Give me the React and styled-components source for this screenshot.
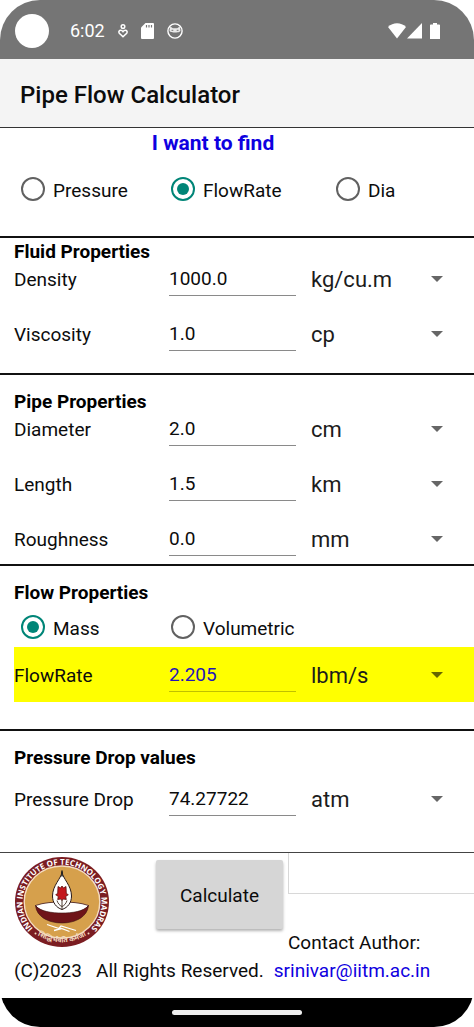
import React, { useState } from "react";
import styled, { createGlobalStyle, css } from "styled-components";

const theme = {
  text: "#0c0c0c",
  muted: "#616161",
  accent: "#008577",
  link: "#0f00e0",
  highlight: "#ffff00",
};

const GlobalStyle = createGlobalStyle`
  * {
    box-sizing: border-box;
  }

  body {
    margin: 0;
    background: #ffffff;
    color: ${theme.text};
    font-family: Roboto, "Liberation Sans", sans-serif;
    font-size: 19px;
    line-height: 24px;
  }
`;

const Screen = styled.div`
  display: flex;
  flex-direction: column;
  min-height: 100vh;
  overflow: hidden;
  border-radius: 40px;
  background: #ffffff;
`;

const StatusBar = styled.div`
  display: flex;
  align-items: center;
  justify-content: space-between;
  height: 59px;
  padding: 3px 34px 0 15px;
  background: #757575;
  color: #ffffff;
`;

const StatusGroup = styled.div`
  display: flex;
  align-items: center;
  gap: ${({ $gap }) => $gap}px;
`;

const Camera = styled.span`
  width: 34px;
  height: 34px;
  margin-right: 8px;
  border-radius: 50%;
  background: #ffffff;
`;

const Clock = styled.time`
  font-size: 18px;
`;

const Header = styled.header`
  padding: 22px 20px 18px;
  border-bottom: 1px solid #333333;
  background: #f4f4f4;
`;

const AppTitle = styled.h1`
  margin: 0;
  font-size: 24px;
  font-weight: 500;
  line-height: 28px;
`;

const Section = styled.section`
  padding-top: ${({ $top = 13 }) => $top}px;
  padding-bottom: ${({ $bottom = 0 }) => $bottom}px;
  border-bottom: ${({ $thin }) => ($thin ? "1px solid #444444" : "2px solid #111111")};
`;

const FindTitle = styled.h2`
  margin: 0;
  padding: 1px 48px 0 0;
  color: ${theme.link};
  font-size: 21px;
  font-weight: 700;
  line-height: 28px;
  text-align: center;
`;

const SectionTitle = styled.h2`
  height: 24px;
  margin: 0;
  padding-left: 14px;
  color: #000000;
  font-size: 19px;
  font-weight: 700;
  line-height: 28px;
`;

const RadioGroup = styled.div`
  display: grid;
  grid-template-columns: 150fr 165fr 138fr;
  padding: ${({ $pad }) => $pad};
`;

const RadioLabel = styled.label`
  display: flex;
  align-items: center;
  gap: 8px;
  height: 24px;
  cursor: pointer;
`;

const RadioText = styled.span`
  padding-top: 3px;
`;

const RadioInput = styled.input`
  display: grid;
  place-items: center;
  flex: none;
  appearance: none;
  width: 24px;
  height: 24px;
  margin: 0;
  border: 2px solid ${theme.muted};
  border-radius: 50%;

  &:checked {
    border-color: ${theme.accent};
  }

  &:checked::before {
    content: "";
    width: 12px;
    height: 12px;
    border-radius: 50%;
    background: ${theme.accent};
  }
`;

const Fields = styled.div`
  display: grid;
  gap: 21px;
  padding-top: ${({ $top = 0 }) => $top}px;
  padding-left: 14px;
`;

const FieldRow = styled.div`
  display: grid;
  grid-template-columns: 155fr 142fr 163fr;
  align-items: center;

  ${({ $highlight }) =>
    $highlight &&
    css`
      padding: 11px 0 10px;
      background: ${theme.highlight};
    `}
`;

const FieldLabel = styled.label`
  padding-top: 2px;
`;

const ValueInput = styled.input`
  width: calc(100% - 15px);
  height: 34px;
  padding: 0 0 1px;
  border: 0;
  border-bottom: 1px solid ${({ $blue }) => ($blue ? "#c0c000" : "#8a8a8a")};
  border-radius: 0;
  outline: none;
  background: transparent;
  color: ${({ $blue }) => ($blue ? "#2414b8" : theme.text)};
  font: inherit;
`;

const SelectBox = styled.div`
  display: grid;
  align-items: center;

  > * {
    grid-area: 1 / 1;
  }
`;

const UnitSelect = styled.select`
  appearance: none;
  width: 100%;
  height: 34px;
  padding: 2px 0 0;
  border: 0;
  outline: none;
  background: transparent;
  color: #1c1c1c;
  font: inherit;
  font-size: 22px;
`;

const Arrow = styled.svg`
  justify-self: end;
  width: 12px;
  height: 6px;
  margin-right: 31px;
  pointer-events: none;
  fill: rgba(0, 0, 0, 0.6);
`;

const Footer = styled.footer`
  padding-left: 14px;
`;

const FooterGrid = styled.div`
  display: grid;
  grid-template-columns: 142fr 132fr 186fr;
  align-items: start;
`;

const Logo = styled.svg`
  display: block;
  width: 96px;
  height: 92px;
  margin-top: 3px;
`;

const CalculateButton = styled.button`
  height: 69px;
  margin: 7px 5px 0 0;
  padding: 2px 0 0;
  border: 0;
  border-radius: 2px;
  background: #d6d6d6;
  box-shadow: 0 2px 3px rgba(0, 0, 0, 0.3);
  color: ${theme.text};
  font: inherit;
  cursor: pointer;
`;

const Message = styled.input`
  display: block;
  width: 100%;
  height: 41px;
  border: solid #d8d8d8;
  border-width: 0 0 1px 1px;
  outline: none;
  background: transparent;
  font: inherit;
`;

const Contact = styled.p`
  margin: 37px 0 4px;
`;

const Legal = styled.div`
  display: flex;
  flex-wrap: wrap;
  gap: 10px;
  white-space: pre;
`;

const MailLink = styled.a`
  color: ${theme.link};
  text-decoration: none;
`;

const NavBar = styled.div`
  display: flex;
  align-items: center;
  justify-content: center;
  height: 29px;
  margin-top: auto;
  background: #000000;
`;

const NavHandle = styled.span`
  width: 130px;
  height: 5px;
  border-radius: 3px;
  background: #eeeeee;
`;

const Radio = ({ name, label, checked, onChange }) => (
  <RadioLabel>
    <RadioInput type="radio" name={name} checked={checked} onChange={() => onChange(label)} />
    <RadioText>{label}</RadioText>
  </RadioLabel>
);

const Field = ({ id, label, value, units, highlight }) => (
  <FieldRow $highlight={highlight}>
    <FieldLabel htmlFor={id}>{label}</FieldLabel>
    <ValueInput id={id} type="text" inputMode="decimal" defaultValue={value} $blue={highlight} />
    <SelectBox>
      <UnitSelect aria-label={`${label} unit`} defaultValue={units[0]}>
        {units.map((unit) => (
          <option key={unit}>{unit}</option>
        ))}
      </UnitSelect>
      <Arrow viewBox="0 0 12 6" aria-hidden="true">
        <path d="M0 0h12L6 6z" />
      </Arrow>
    </SelectBox>
  </FieldRow>
);

const InstituteLogo = () => (
  <Logo viewBox="0 0 96 92" role="img" aria-label="Indian Institute of Technology Madras">
    <defs>
      <path id="ringTop" d="M19.500 73A39.500 38 0 1 1 76.500 73" />
      <path id="ringBottom" d="M16 73A44 42.500 0 0 0 80 73" />
    </defs>
    <ellipse cx="48" cy="46" rx="47" ry="45" fill="#7b1d22" />
    <ellipse cx="48" cy="46" rx="37.8" ry="36" fill="#d6a04c" stroke="#f4dcc0" strokeWidth="1.4" />
    <text fill="#ffffff" fontSize="8" fontWeight="700" fontFamily="Open Sans, Noto Sans, sans-serif">
      <textPath href="#ringTop" startOffset="50%" textAnchor="middle">
        INDIAN INSTITUTE OF TECHNOLOGY MADRAS
      </textPath>
    </text>
    <text fill="#f4dcc0" fontSize="7" fontWeight="700" fontFamily="Noto Sans, sans-serif">
      <textPath href="#ringBottom" startOffset="50%" textAnchor="middle">
        सिद्धिर्भवति कर्मजा
      </textPath>
    </text>
    <circle cx="21.5" cy="77.5" r="1" fill="#f4dcc0" />
    <circle cx="74.5" cy="77.5" r="1" fill="#f4dcc0" />
    <path
      d="M21.500 49.500c8-3 19-3.500 26.500-3.500s18.500.5 26.500 3.500C70 56 58 58 48 58S26 56 21.500 49.500z"
      fill="#ffffff"
      stroke="#3d1414"
      strokeWidth="0.8"
    />
    <path
      d="M21.500 49.500C22.500 60.500 34 67 48 67s25.500-6.500 26.500-17.500C70 55.500 58 57 48 57S26 55.500 21.500 49.500z"
      fill="#6f1419"
      stroke="#3d1414"
      strokeWidth="0.6"
    />
    <path
      d="M48 16c.8 6.500 9.500 13.500 9.500 24 0 6.500-3.500 11.500-9.500 13.500-6-2-9.500-7-9.500-13.500 0-10.500 8.700-17.500 9.500-24z"
      fill="#ffffff"
      stroke="#2a1a18"
      strokeWidth="1"
    />
    <path d="M47.200 14.500h1.600v6h-1.600z" fill="#222222" />
    <path
      d="M44 30.500l2.500 1.500 1.500-2 1.500 2 2.500-1.500.3 7 2 1.200-2.600 1.800.6 3-3-.5-1.300 1.500-1.300-1.500-3 .5.600-3-2.600-1.800 2-1.200z"
      fill="#c4171d"
      stroke="#58100f"
      strokeWidth="0.8"
    />
    <path
      d="M48 44v9.500M43 44.500c1 3 2.500 5 5 6 2.500-1 4-3 5-6"
      fill="none"
      stroke="#3d2a20"
      strokeWidth="0.900"
    />
    <path
      d="M33 68.500l12 4 2-2.500 15 4.500M40 74.500l7.500-2 8 3"
      fill="none"
      stroke="#ffffff"
      strokeWidth="1.300"
    />
  </Logo>
);

const StatusIcons = () => (
  <StatusGroup $gap={13}>
    <Camera />
    <Clock>6:02</Clock>
    <svg width="10" height="14" viewBox="0 0 10 14" fill="none" stroke="#ffffff" strokeWidth="1.5">
      <circle cx="5" cy="2.600" r="1.800" />
      <path d="M5 12.800L1.300 9.200C.3 7.800 1.300 6.200 2.700 6.200c1 0 1.700.5 2.300 1.400.6-.9 1.300-1.400 2.300-1.400 1.400 0 2.400 1.600 1.400 3z" />
    </svg>
    <svg width="13" height="16" viewBox="0 0 13 16">
      <path d="M4.500 0H12a1 1 0 0 1 1 1v14a1 1 0 0 1-1 1H1a1 1 0 0 1-1-1V4.500z" fill="#ffffff" />
      <path d="M5.500 2v2.500M8 2v2.500M10.500 2v2.500" stroke="#757575" strokeWidth="1.200" />
    </svg>
    <svg width="16" height="16" viewBox="0 0 16 16">
      <circle cx="8" cy="8" r="7.100" fill="none" stroke="#ffffff" strokeWidth="1.400" />
      <path
        d="M3.300 3.600L5.800 5.200h4.400l2.500-1.600.8 3.600c0 1.300-1.500 2.300-5.500 2.300S2.500 8.500 2.500 7.200z"
        fill="#ffffff"
        fillOpacity="0.850"
      />
      <path d="M4.500 7.300h1.800M9.700 7.300h1.800" stroke="#757575" strokeWidth="1" />
    </svg>
  </StatusGroup>
);

const SignalIcons = () => (
  <StatusGroup $gap={1}>
    <svg width="18" height="16" viewBox="0 0 18 16" fill="#ffffff">
      <path d="M0 4C5-1 13-1 18 4L9 15.500z" />
    </svg>
    <svg width="15" height="16" viewBox="0 0 15 16" fill="#ffffff">
      <path d="M15 0v15.500H0z" />
    </svg>
    <svg width="17" height="16" viewBox="1 0 17 16" fill="#ffffff">
      <path d="M11 0h4v1.500h2.200a.8.800 0 0 1 .8.800V16H8V2.300a.8.800 0 0 1 .8-.8H11z" />
    </svg>
  </StatusGroup>
);

const App = () => {
  const [target, setTarget] = useState("FlowRate");
  const [flowType, setFlowType] = useState("Mass");

  return (
    <>
      <GlobalStyle />
      <Screen>
        <StatusBar>
          <StatusIcons />
          <SignalIcons />
        </StatusBar>

        <Header>
          <AppTitle>Pipe Flow Calculator</AppTitle>
        </Header>

        <main>
          <Section $top={0} $bottom={35}>
            <FindTitle>I want to find</FindTitle>
            <RadioGroup $pad="20px 0 0 21px">
              {["Pressure", "FlowRate", "Dia"].map((name) => (
                <Radio
                  key={name}
                  name="target"
                  label={name}
                  checked={target === name}
                  onChange={setTarget}
                />
              ))}
            </RadioGroup>
          </Section>

          <Section $top={0} $bottom={22}>
            <SectionTitle>Fluid Properties</SectionTitle>
            <Fields>
              <Field id="density" label="Density" value="1000.0" units={["kg/cu.m", "lb/cu.ft"]} />
              <Field id="viscosity" label="Viscosity" value="1.0" units={["cp", "Pa.s"]} />
            </Fields>
          </Section>

          <Section $bottom={8}>
            <SectionTitle>Pipe Properties</SectionTitle>
            <Fields>
              <Field id="diameter" label="Diameter" value="2.0" units={["cm", "inch"]} />
              <Field id="length" label="Length" value="1.5" units={["km", "ft"]} />
              <Field id="roughness" label="Roughness" value="0.0" units={["mm", "inch"]} />
            </Fields>
          </Section>

          <Section $bottom={27}>
            <SectionTitle>Flow Properties</SectionTitle>
            <RadioGroup $pad="12px 0 8px 21px">
              {["Mass", "Volumetric"].map((name) => (
                <Radio
                  key={name}
                  name="flowType"
                  label={name}
                  checked={flowType === name}
                  onChange={setFlowType}
                />
              ))}
            </RadioGroup>
            <Fields>
              <Field id="flowrate" label="FlowRate" value="2.205" units={["lbm/s", "kg/s"]} highlight />
            </Fields>
          </Section>

          <Section $bottom={36} $thin>
            <SectionTitle>Pressure Drop values</SectionTitle>
            <Fields $top={14}>
              <Field id="drop" label="Pressure Drop" value="74.27722" units={["atm", "bar"]} />
            </Fields>
          </Section>
        </main>

        <Footer>
          <FooterGrid>
            <InstituteLogo />
            <CalculateButton type="button">Calculate</CalculateButton>
            <div>
              <Message type="text" aria-label="Message" readOnly />
              <Contact>Contact Author:</Contact>
            </div>
          </FooterGrid>
          <Legal>
            <span>(C)2023   All Rights Reserved.</span>
            <MailLink href="mailto:srinivar@iitm.ac.in">srinivar@iitm.ac.in</MailLink>
          </Legal>
        </Footer>

        <NavBar>
          <NavHandle />
        </NavBar>
      </Screen>
    </>
  );
};

export default App;
